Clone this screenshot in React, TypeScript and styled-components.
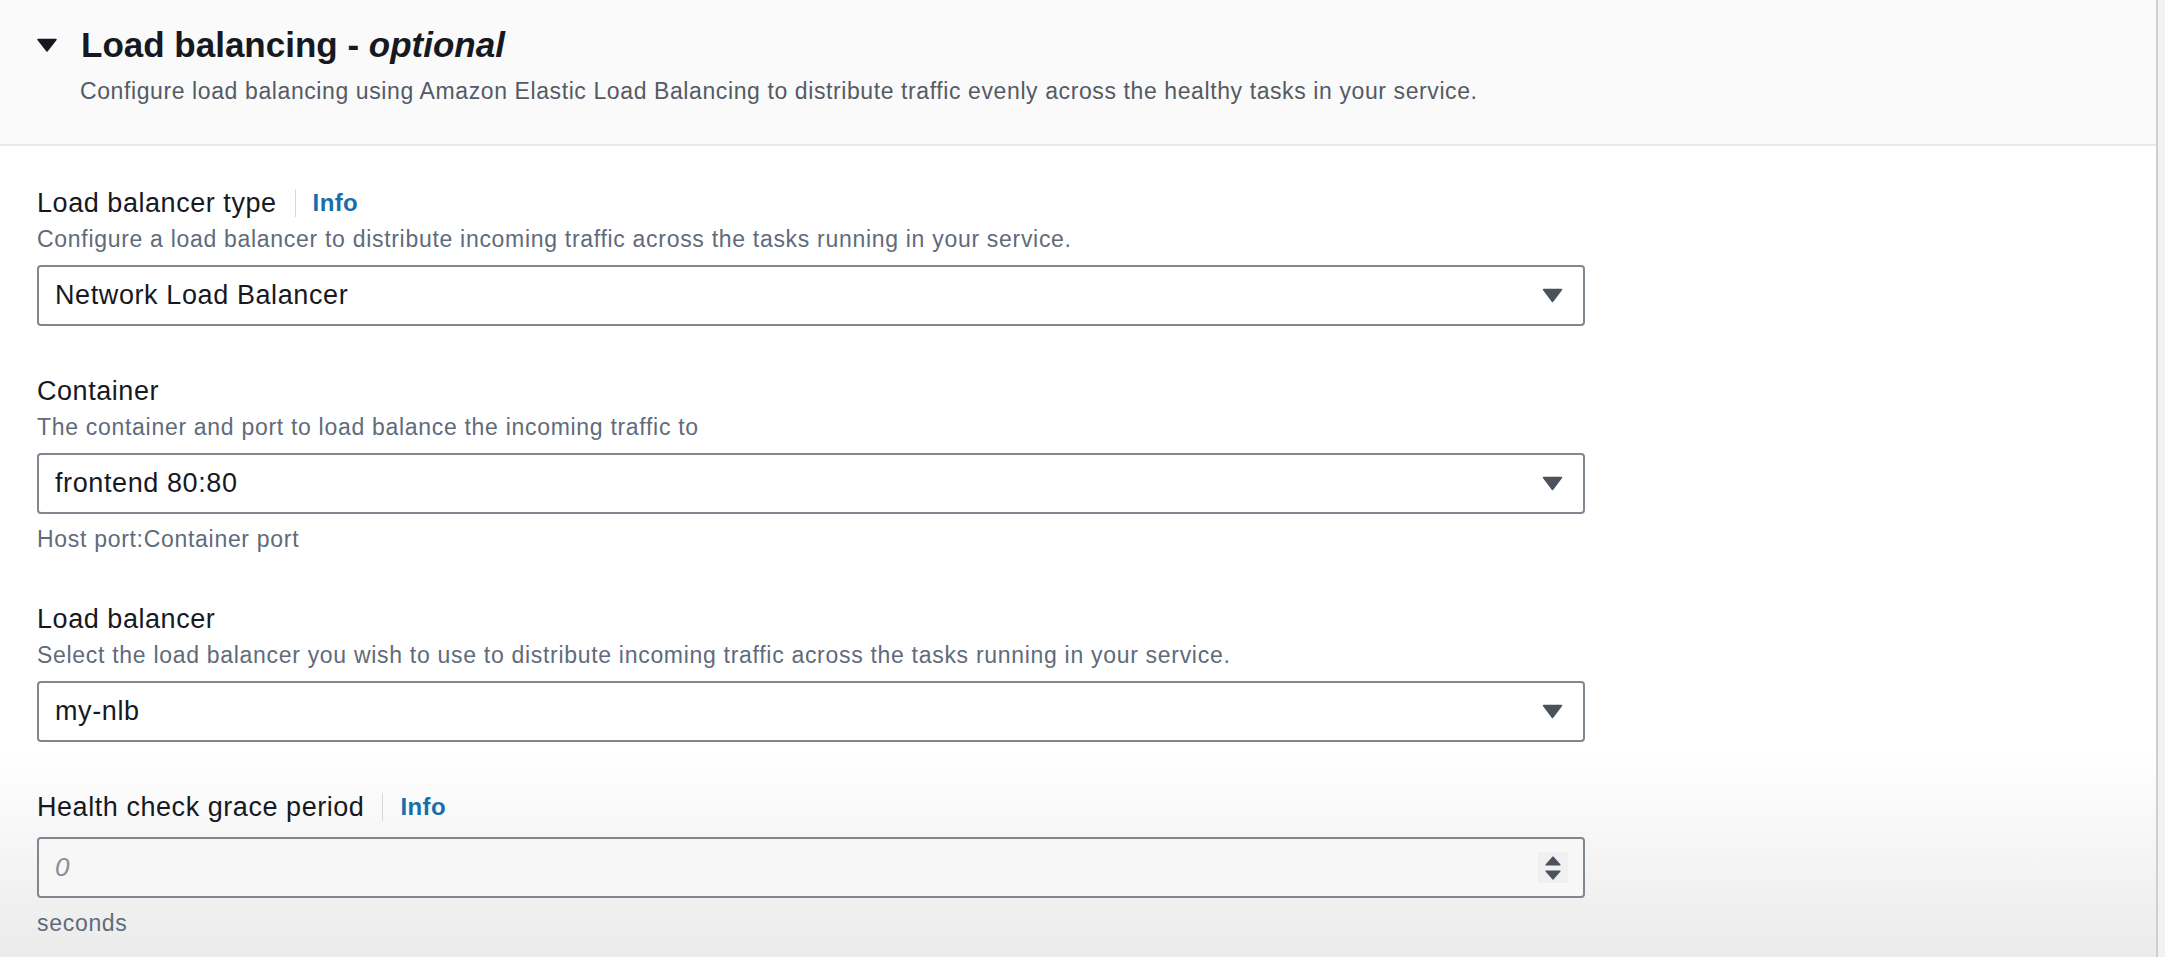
import React from 'react'
import styled, { createGlobalStyle } from 'styled-components'

const GlobalStyle = createGlobalStyle`
  html, body {
    margin: 0;
    padding: 0;
    background: #f2f2f2;
  }
  * {
    box-sizing: border-box;
  }
`

const Page = styled.div`
  display: flex;
  height: 957px;
  overflow: hidden;
  font-family: 'Liberation Sans', Arial, sans-serif;
`

const Panel = styled.div`
  flex: 0 0 2158px;
  display: flex;
  flex-direction: column;
  border-right: 2px solid #cfcfcf;
  background: linear-gradient(180deg, #ffffff 0, #ffffff 750px, #ebebeb 957px);
`

const Header = styled.div`
  height: 146px;
  padding: 21px 0 0 37px;
  background: #fafafa;
  border-bottom: 2px solid #e9ebeb;
`

const HeadingRow = styled.div`
  display: flex;
  align-items: center;
  gap: 24px;
  height: 48px;
`

const Heading = styled.h2`
  margin: 0;
  font-size: 35px;
  line-height: 48px;
  font-weight: 700;
  color: #16191f;
  & em {
    font-style: italic;
  }
`

const HeaderText = styled.p`
  margin: 7px 0 0 43px;
  font-size: 23px;
  line-height: 30px;
  letter-spacing: 0.6px;
  color: #545b64;
`

const Form = styled.div`
  display: flex;
  flex-direction: column;
  gap: 47px;
  padding: 39px 0 0 37px;
  width: 1585px;
`

const Field = styled.div`
  display: flex;
  flex-direction: column;
`

const LabelRow = styled.div`
  display: flex;
  align-items: center;
  height: 36px;
`

const Label = styled.span`
  font-size: 27px;
  letter-spacing: 0.55px;
  color: #16191f;
`

const Divider = styled.span`
  width: 1px;
  height: 28px;
  margin: 0 17px 0 18px;
  background: #d5dbdb;
`

const InfoLink = styled.span`
  font-size: 24px;
  font-weight: 700;
  letter-spacing: 0.4px;
  color: #1a6ea8;
`

const Description = styled.div`
  font-size: 23px;
  line-height: 36px;
  letter-spacing: 0.7px;
  color: #5f6b7a;
`

const Box = styled.div<{ $top: number; $muted?: boolean }>`
  display: flex;
  align-items: center;
  justify-content: space-between;
  margin-top: ${(p) => p.$top}px;
  height: 61px;
  padding: 0 20px 0 16px;
  border: 2px solid #7f8790;
  border-radius: 4px;
  background: ${(p) => (p.$muted ? '#f7f7f7' : '#ffffff')};
`

const Value = styled.span`
  font-size: 27px;
  letter-spacing: 0.6px;
  color: #16191f;
`

const Placeholder = styled.span`
  font-size: 26px;
  font-style: italic;
  color: #8a8f96;
`

const Spinner = styled.span`
  display: flex;
  align-items: center;
  justify-content: center;
  width: 30px;
  height: 31px;
  margin-right: -5px;
  background: #f0f0f0;
`

const Hint = styled.div`
  margin-top: 10px;
  font-size: 23px;
  line-height: 30px;
  letter-spacing: 0.7px;
  color: #5f6b7a;
`

const Caret = () => (
  <svg width={20} height={14} viewBox='0 0 20 14'>
    <path d='M1 1.5 L19 1.5 L10 13 Z' fill='#16191f' stroke='#16191f' strokeWidth='1.5' strokeLinejoin='round' />
  </svg>
)

const SelectCaret = () => (
  <svg width={21} height={15} viewBox='0 0 21 15'>
    <path d='M1.5 1.5 L19.5 1.5 L10.5 13.5 Z' fill='#4b525b' stroke='#4b525b' strokeWidth='1.5' strokeLinejoin='round' />
  </svg>
)

const SpinIcon = () => (
  <svg width={18} height={28} viewBox='0 0 18 28'>
    <path d='M9 3 L16 11 L2 11 Z' fill='#4b525b' stroke='#4b525b' strokeWidth='1.2' strokeLinejoin='round' />
    <path d='M2 17 L16 17 L9 25 Z' fill='#4b525b' stroke='#4b525b' strokeWidth='1.2' strokeLinejoin='round' />
  </svg>
)

interface SelectFieldProps {
  label: string
  info?: boolean
  description?: string
  value: string
  hint?: string
}

const SelectField = ({ label, info, description, value, hint }: SelectFieldProps) => (
  <Field>
    <LabelRow>
      <Label>{label}</Label>
      {info && (
        <>
          <Divider />
          <InfoLink>Info</InfoLink>
        </>
      )}
    </LabelRow>
    {description && <Description>{description}</Description>}
    <Box $top={description ? 8 : 12}>
      <Value>{value}</Value>
      <SelectCaret />
    </Box>
    {hint && <Hint>{hint}</Hint>}
  </Field>
)

const App = () => {
  return (
    <>
      <GlobalStyle />
      <Page>
        <Panel>
          <Header>
            <HeadingRow>
              <Caret />
              <Heading>
                Load balancing - <em>optional</em>
              </Heading>
            </HeadingRow>
            <HeaderText>
              Configure load balancing using Amazon Elastic Load Balancing to distribute traffic
              evenly across the healthy tasks in your service.
            </HeaderText>
          </Header>
          <Form>
            <SelectField
              label='Load balancer type'
              info
              description='Configure a load balancer to distribute incoming traffic across the tasks running in your service.'
              value='Network Load Balancer'
            />
            <SelectField
              label='Container'
              description='The container and port to load balance the incoming traffic to'
              value='frontend 80:80'
              hint='Host port:Container port'
            />
            <SelectField
              label='Load balancer'
              description='Select the load balancer you wish to use to distribute incoming traffic across the tasks running in your service.'
              value='my-nlb'
            />
            <Field>
              <LabelRow>
                <Label>Health check grace period</Label>
                <Divider />
                <InfoLink>Info</InfoLink>
              </LabelRow>
              <Box $top={12} $muted>
                <Placeholder>0</Placeholder>
                <Spinner>
                  <SpinIcon />
                </Spinner>
              </Box>
              <Hint>seconds</Hint>
            </Field>
          </Form>
        </Panel>
      </Page>
    </>
  )
}

export default App
